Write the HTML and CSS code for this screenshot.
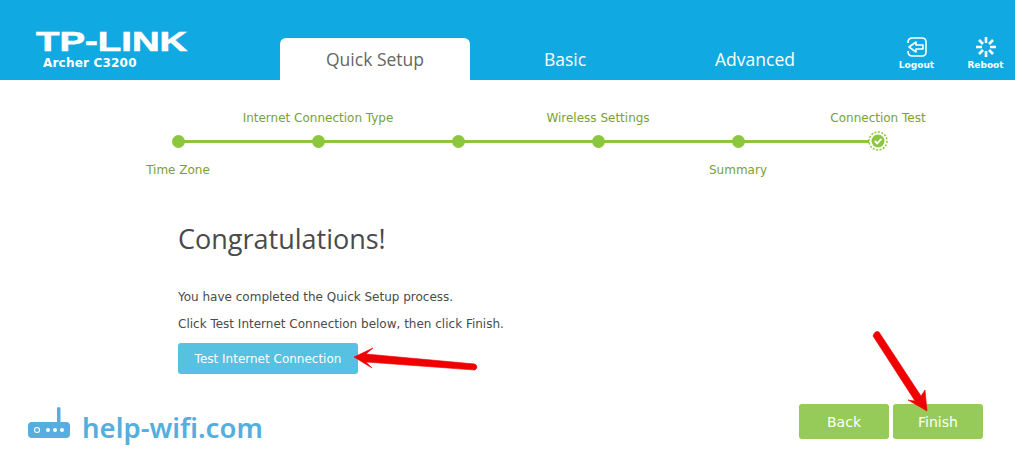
FILE: index.html
```html
<!DOCTYPE html>
<html lang="en">
<head>
  <meta charset="UTF-8">
  <meta name="viewport" content="width=device-width, initial-scale=1.0">
  <title>TP-LINK Archer C3200 - Quick Setup</title>
  <link rel="stylesheet" href="styles.css">
</head>
<body>
  <header class="topbar">
    <div class="brand">
      <div class="brand-logo">TP-LINK</div>
      <div class="brand-model">Archer C3200</div>
    </div>
    <nav class="tabs">
      <a class="tab active">Quick Setup</a>
      <a class="tab">Basic</a>
      <a class="tab">Advanced</a>
    </nav>
    <div class="tools">
      <a class="tool">
        <svg width="22" height="20" viewBox="0 0 22 20" fill="none" stroke="#fff" stroke-width="1.6">
          <path d="M2 6V5.500Q2 1 6.500 1H16Q20 1 20 5V15Q20 19 16 19H6.500Q2 19 2 14.500V14"/>
          <path d="M3 10L10 5V8H17V12H10V15Z" stroke-linejoin="round"/>
        </svg>
        <span>Logout</span>
      </a>
      <a class="tool">
        <svg width="20" height="20" viewBox="0 0 20 20" stroke="#fff" stroke-width="2.600">
          <path d="M10 0V6M10 14V20M0 10H6M14 10H20M3 3L7 7M13 13L17 17M17 3L13 7M7 13L3 17"/>
        </svg>
        <span>Reboot</span>
      </a>
    </div>
  </header>

  <main class="content">
    <section class="stepper">
      <div class="step"><span class="dot"></span><span class="label below">Time Zone</span></div>
      <div class="step"><span class="label above">Internet Connection Type</span><span class="dot"></span></div>
      <div class="step"><span class="dot"></span></div>
      <div class="step"><span class="label above">Wireless Settings</span><span class="dot"></span></div>
      <div class="step"><span class="dot"></span><span class="label below">Summary</span></div>
      <div class="step"><span class="label above">Connection Test</span>
        <svg class="dot-done" width="20" height="20" viewBox="0 0 20 20">
          <circle cx="10" cy="10" r="9" fill="#fff" stroke="#8cc63f" stroke-width="1.500" stroke-dasharray="2 1.500"/>
          <circle cx="10" cy="10" r="6.500" fill="#8cc63f"/>
          <path d="M6.800 10L9.200 12.400L13.400 7.800" fill="none" stroke="#fff" stroke-width="1.800"/>
        </svg>
      </div>
    </section>

    <section class="message">
      <h1>Congratulations!</h1>
      <p>You have completed the Quick Setup process.</p>
      <p>Click Test Internet Connection below, then click Finish.</p>
      <button class="btn btn-test" type="button">Test Internet Connection</button>
    </section>

    <div class="actions">
      <button class="btn btn-nav" type="button">Back</button>
      <button class="btn btn-nav" type="button">Finish</button>
    </div>
  </main>

  <div class="watermark">
    <svg width="44" height="34" viewBox="0 0 44 34" fill="#55aedd">
      <rect x="30" y="0" width="3.500" height="18" rx="1.500"/>
      <rect x="1" y="15" width="42" height="16" rx="4"/>
      <circle cx="10" cy="23" r="2.500" fill="none" stroke="#fff" stroke-width="1.200"/>
      <circle cx="21" cy="23" r="2" fill="#fff"/>
      <circle cx="28" cy="23" r="2" fill="#fff"/>
      <circle cx="35" cy="23" r="2" fill="#fff"/>
    </svg>
    <span>help-wifi.com</span>
  </div>

  <svg class="arrows" width="1015" height="461" viewBox="0 0 1015 461" fill="#f00000">
    <path d="M354 357L373 348L366 354L475 364Q479 367 475 370L366 362L372 368Z" stroke="#f00000" stroke-width="0.600" stroke-linejoin="round"/>
    <path d="M873 336Q875 330 879 332L921 396L925 390L927 411L908 400L915 401Z" stroke="#f00000" stroke-width="0.600" stroke-linejoin="round"/>
  </svg>
</body>
</html>
```

FILE: styles.css
```css
body {
  margin: 0;
  height: 461px;
  overflow: hidden;
  position: relative;
  background-color: #fff;
  font-family: "DejaVu Sans", Verdana, sans-serif;
  font-size: 12px;
  color: #4a4a4a;
}

.topbar {
  display: flex;
  height: 80px;
  background-color: #10a9e1;
  color: #fff;
}
.brand {
  flex: none;
  width: 280px;
  box-sizing: border-box;
  padding: 28px 0 0 36px;
}
.brand-logo {
  font-family: "Liberation Sans", Arial, sans-serif;
  font-weight: bold;
  font-size: 28px;
  line-height: 28px;
  -webkit-text-stroke: 0.6px #fff;
  transform: scaleX(1.37);
  transform-origin: left center;
}
.brand-model {
  margin: 0 0 0 7px;
  font-weight: bold;
  font-size: 12px;
  line-height: 14px;
  letter-spacing: 0.2px;
}

.tabs {
  flex: none;
  display: flex;
  align-items: flex-end;
  height: 80px;
}
.tab {
  width: 190px;
  height: 42px;
  line-height: 42px;
  text-align: center;
  font-family: "Open Sans", sans-serif;
  font-size: 17.5px;
}
.tab.active {
  background-color: #fff;
  color: #666;
  border-radius: 6px 6px 0 0;
}

.tools {
  flex: none;
  display: flex;
  margin-left: 32px;
}
.tool {
  width: 69px;
  display: flex;
  flex-direction: column;
  align-items: center;
  padding-top: 37px;
  font-size: 9px;
  font-weight: bold;
}
.tool span {
  margin-top: 3px;
}

.content {
  position: relative;
  height: 381px;
}

.stepper {
  display: grid;
  grid-template-columns: repeat(6, 140px);
  width: 840px;
  margin-left: 108px;
  padding-top: 28px;
  position: relative;
  color: #78a234;
}
.stepper::before {
  content: "";
  position: absolute;
  left: 70px;
  width: 700px;
  top: 60px;
  height: 3px;
  background-color: #8cc63f;
}
.step {
  display: grid;
  grid-template-columns: 140px;
  grid-template-rows: 18px 30px 26px;
  justify-items: center;
  align-items: center;
  position: relative;
  height: 74px;
}
.dot {
  grid-row: 2;
  width: 13px;
  height: 13px;
  border-radius: 50%;
  background-color: #8cc63f;
}
.dot-done {
  grid-row: 2;
}
.label {
  white-space: nowrap;
  line-height: 16px;
  margin-top: 2px;
}
.label.above {
  grid-row: 1;
}
.label.below {
  grid-row: 3;
}

.message {
  margin: 39px 0 0 178px;
}
.message h1 {
  margin: 0 0 32px;
  font-family: "Open Sans", sans-serif;
  font-size: 27px;
  font-weight: 400;
  line-height: 36px;
  color: #4a4a4a;
}
.message p {
  margin: 0 0 11px;
  line-height: 16px;
}

.btn {
  border: none;
  border-radius: 3px;
  color: #fff;
  font-family: "DejaVu Sans", Verdana, sans-serif;
}
.btn-test {
  width: 180px;
  height: 31px;
  margin-top: 0;
  background-color: #56c1e1;
  font-size: 12px;
}

.actions {
  position: absolute;
  right: 32px;
  top: 324px;
  display: flex;
  gap: 4px;
}
.btn-nav {
  width: 90px;
  height: 35px;
  background-color: #96cb5a;
  font-size: 14px;
}

.watermark {
  position: absolute;
  left: 27px;
  top: 407px;
  display: flex;
  align-items: flex-start;
  gap: 11px;
  color: #55aedd;
  font-family: "Noto Sans", sans-serif;
  font-size: 27.5px;
  font-weight: 600;
  line-height: 38px;
}
.watermark span {
  margin-top: 2px;
}

.arrows {
  position: absolute;
  left: 0;
  top: 0;
  pointer-events: none;
}
```
